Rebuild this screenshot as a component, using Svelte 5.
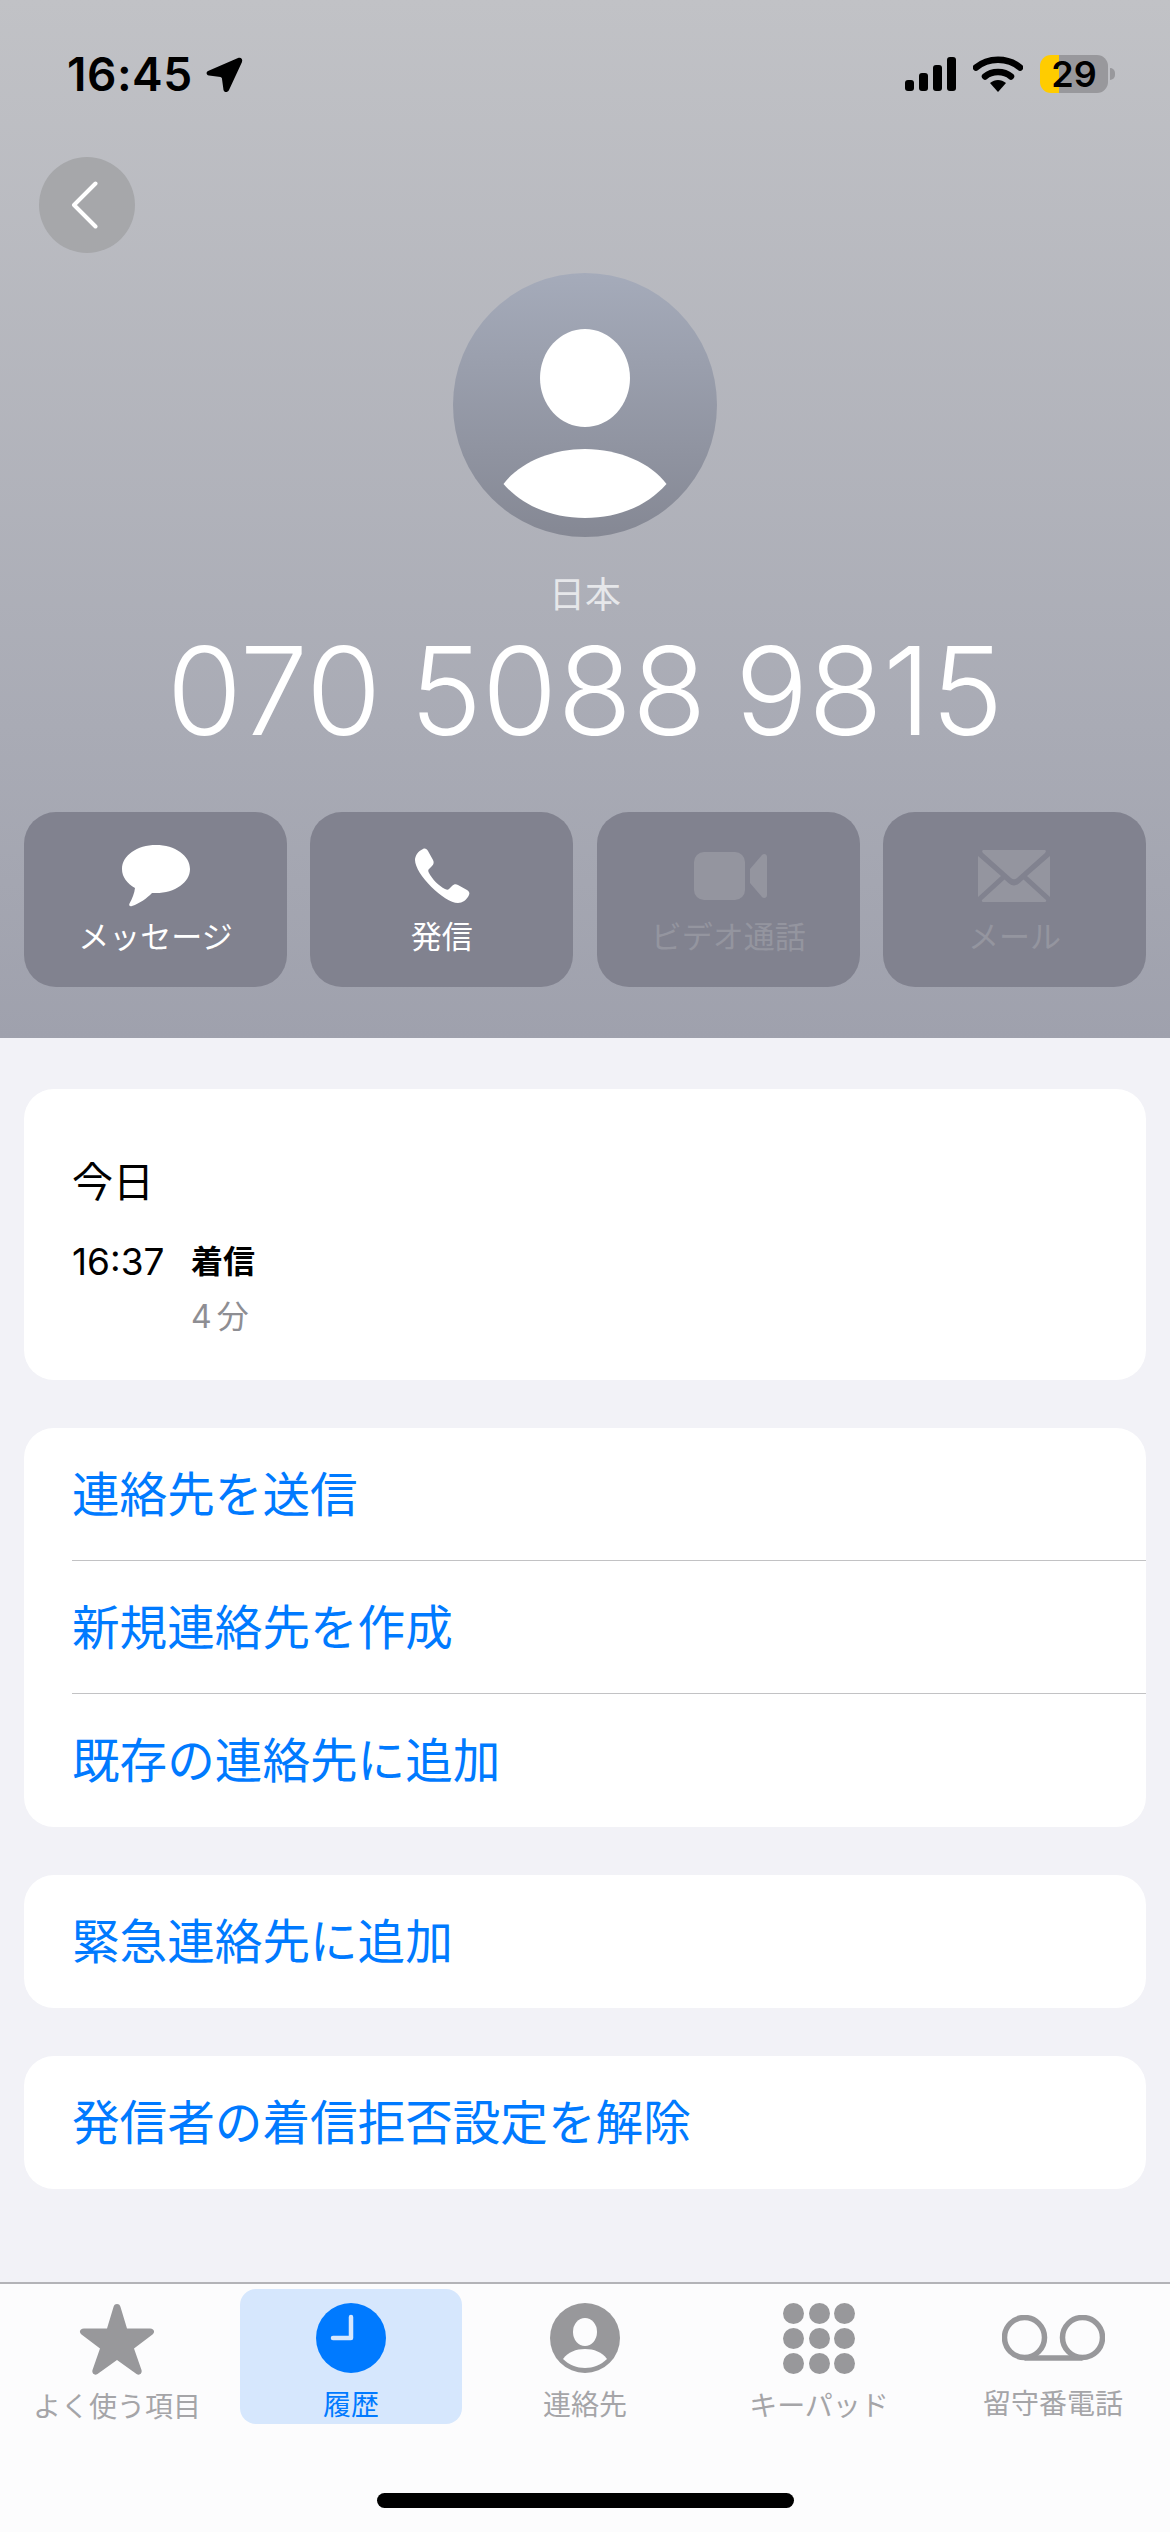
<script>
  const actions = [
    { label: 'メッセージ', icon: 'message', on: true },
    { label: '発信', icon: 'phone', on: true },
    { label: 'ビデオ通話', icon: 'video', on: false },
    { label: 'メール', icon: 'mail', on: false }
  ];

  const contactRows = ['連絡先を送信', '新規連絡先を作成', '既存の連絡先に追加'];

  const tabs = [
    { label: 'よく使う項目', icon: 'star' },
    { label: '履歴', icon: 'clock', active: true },
    { label: '連絡先', icon: 'person' },
    { label: 'キーパッド', icon: 'keypad' },
    { label: '留守番電話', icon: 'voicemail' }
  ];

  const keys = [0, 1, 2, 3, 4, 5, 6, 7, 8];
</script>

<div class="screen">
  <header class="hero">
    <div class="status">
      <div class="clock">
        <span>16:45</span>
        <svg class="loc" viewBox="0 0 37 36" width="37" height="36">
          <path d="M2 14 L32 1 C35 0 37 2 36 5 L23 33 C21.500 36 18 35.500 17.500 33 L16 22 C16 21 15.500 20.500 14.500 20 L3 18.500 C0 18 0 15 2 14 Z" fill="#000" />
        </svg>
      </div>
      <div class="status-right">
        <svg viewBox="0 0 51 34" width="51" height="34">
          <rect x="0" y="23" width="9" height="11" rx="3" />
          <rect x="14" y="16" width="9" height="18" rx="3" />
          <rect x="28" y="8" width="9" height="26" rx="3" />
          <rect x="42" y="0" width="9" height="34" rx="3" />
        </svg>
        <svg viewBox="0 0 50 36" width="50" height="36">
          <path d="M3 11.500 C15 1 35 1 47 11.500" fill="none" stroke="#000" stroke-width="6.500" stroke-linecap="round" />
          <path d="M12 20.500 C19 14.500 31 14.500 38 20.500" fill="none" stroke="#000" stroke-width="6.500" stroke-linecap="round" />
          <path d="M17 27 C22 23 28 23 33 27 L25.500 35.500 C25.200 35.800 24.800 35.800 24.500 35.500 Z" fill="#000" />
        </svg>
        <div class="battery">
          <span class="cell">29</span>
          <span class="nub"></span>
        </div>
      </div>
    </div>

    <button class="back" aria-label="戻る">
      <svg viewBox="0 0 27 48" width="27" height="48">
        <path d="M24.500 2.500 L3 24 L24.500 45.500" fill="none" stroke="#fff" stroke-width="4" stroke-linecap="round" stroke-linejoin="round" />
      </svg>
    </button>

    <div class="avatar">
      <svg viewBox="0 0 264 264" width="264" height="264">
        <ellipse cx="132" cy="105" rx="45" ry="49" fill="#fff" />
        <path d="M50.500 211 C66 190 98 176 132 176 C166 176 198 190 213.500 211 C194 233 165 245 132 245 C99 245 70 233 50.500 211 Z" fill="#fff" />
      </svg>
    </div>

    <div class="country">日本</div>
    <div class="number">070 5088 9815</div>

    <div class="actions">
      {#each actions as a}
        <button class="action" class:off={!a.on}>
          <span class="action-icon">
            {#if a.icon === 'message'}
              <svg viewBox="0 0 68 62" width="68" height="62">
                <path d="M34 0 C15 0 0 10.500 0 24 C0 32 5 38.500 13 43 C12.500 48 10 54 7.500 58.500 C6.500 60.500 8 61.800 10 61 C18 58.500 25 53 30 48 C31.300 48 32.700 48 34 48 C53 48 68 37.500 68 24 C68 10.500 53 0 34 0 Z" fill="currentColor" />
              </svg>
            {:else if a.icon === 'phone'}
              <svg viewBox="0 0 56 56" width="56" height="56">
                <path d="M9 1 C11 0 13 1 14 3 L19 12 C20 14 20 16 18 18 L15 21 C14 22 14 23 15 25 C18 31 25 38 31 41 C33 42 34 42 35 41 L38 38 C40 36 42 36 44 37 L53 42 C55 43 56 45 55 47 C53 52 48 55 44 55 C30 55 1 26 1 12 C1 8 4 3 9 1 Z" fill="currentColor" />
              </svg>
            {:else if a.icon === 'video'}
              <svg class="video" viewBox="0 0 73 48" width="73" height="48">
                <rect x="0" y="0" width="51" height="48" rx="10" fill="currentColor" />
                <path d="M56 17 L68 3 C70 1 73 2 73 5 V43 C73 46 70 47 68 45 L56 31 Z" fill="currentColor" />
              </svg>
            {:else}
              <svg viewBox="0 0 72 52" width="72" height="52">
                <path d="M6 0 H66 C68 0 68.500 1.500 67 3 L39 28 C37 29.800 35 29.800 33 28 L5 3 C3.500 1.500 4 0 6 0 Z" fill="currentColor" />
                <path d="M0 6 L23 26 L0 47 Z M72 6 L49 26 L72 47 Z" fill="currentColor" />
                <path d="M26.500 29.500 L31 33.500 C34 36 38 36 41 33.500 L45.500 29.500 L68 50 C68.500 51 68 52 66 52 H6 C4 52 3.500 51 4 50 Z" fill="currentColor" />
              </svg>
            {/if}
          </span>
          <span class="action-label">{a.label}</span>
        </button>
      {/each}
    </div>
  </header>

  <main class="content">
    <section class="card recents">
      <div class="day">今日</div>
      <div class="call">
        <span class="call-time">16:37</span>
        <div>
          <div class="call-type">着信</div>
          <div class="call-len">4 分</div>
        </div>
      </div>
    </section>

    <section class="card">
      {#each contactRows as row}
        <div class="row">{row}</div>
      {/each}
    </section>

    <section class="card">
      <div class="row">緊急連絡先に追加</div>
    </section>

    <section class="card">
      <div class="row">発信者の着信拒否設定を解除</div>
    </section>
  </main>

  <nav class="tabbar">
    <div class="tabs">
      {#each tabs as t}
        <div class="tab" class:active={t.active}>
          <span class="tab-icon">
            {#if t.icon === 'star'}
              <svg viewBox="0 0 76 74" width="76" height="74">
                <path d="M38 2 C40 2 41 3 41.500 5 L48 26.500 H71 C75 26.500 76.500 30 73.500 32.500 L55 46.500 L62.500 68 C63.500 71.500 60.500 74 57.500 72 L38 58 L18.500 72 C15.500 74 12.500 71.500 13.500 68 L21 46.500 L2.500 32.500 C-.5 30 1 26.500 5 26.500 H28 L34.500 5 C35 3 36 2 38 2 Z" fill="currentColor" />
              </svg>
            {:else if t.icon === 'clock'}
              <svg viewBox="0 0 70 70" width="70" height="70">
                <circle cx="35" cy="35" r="35" fill="currentColor" />
                <path d="M35 14 V35 H17" fill="none" stroke="#d6e7fd" stroke-width="4.500" stroke-linecap="round" stroke-linejoin="round" />
              </svg>
            {:else if t.icon === 'person'}
              <svg viewBox="0 0 70 70" width="70" height="70">
                <circle cx="35" cy="35" r="35" fill="currentColor" />
                <ellipse cx="35" cy="29" rx="12" ry="14" fill="#fcfcfd" />
                <path d="M13 56 C18 49 26 46 35 46 C44 46 52 49 57 56 C51 62 43 65 35 65 C27 65 19 62 13 56 Z" fill="#fcfcfd" />
              </svg>
            {:else if t.icon === 'keypad'}
              <span class="keypad">
                {#each keys as k (k)}
                  <span class="key"></span>
                {/each}
              </span>
            {:else}
              <svg viewBox="0 0 103 46" width="103" height="46">
                <path d="M22.500 43 H80.500" stroke="currentColor" stroke-width="5.500" fill="none" />
                <circle cx="22.500" cy="22.500" r="20" fill="none" stroke="currentColor" stroke-width="5.500" />
                <circle cx="80.500" cy="22.500" r="20" fill="none" stroke="currentColor" stroke-width="5.500" />
              </svg>
            {/if}
          </span>
          <span class="tab-label">{t.label}</span>
        </div>
      {/each}
    </div>
    <div class="home-bar"></div>
  </nav>
</div>

<style>
  :global(body) {
    margin: 0;
    background: #f2f2f7;
  }

  .screen {
    width: 1170px;
    height: 2532px;
    display: flex;
    flex-direction: column;
    overflow: hidden;
    background: #f2f2f7;
    font-family: "Inter", "Noto Sans CJK JP", sans-serif;
  }

  .hero {
    height: 1038px;
    box-sizing: border-box;
    padding: 55px 24px 0;
    display: flex;
    flex-direction: column;
    background: linear-gradient(180deg, #c1c2c6 0%, #a9abb5 70%, #9fa1ad 100%);
  }

  .status {
    height: 38px;
    display: flex;
    align-items: center;
    justify-content: space-between;
    padding: 0 31px 0 43px;
    color: #000;
  }

  .clock {
    display: flex;
    align-items: center;
    gap: 13px;
    font-size: 46px;
    font-weight: 600;
    letter-spacing: 0.5px;
    line-height: 38px;
  }

  .loc {
    margin-top: 2px;
  }

  .status-right {
    display: flex;
    align-items: center;
    gap: 17px;
  }

  .status-right svg {
    display: block;
  }

  .battery {
    display: flex;
    align-items: center;
    gap: 2px;
  }

  .cell {
    width: 68px;
    height: 38px;
    border-radius: 11px;
    background: linear-gradient(90deg, #ffcc00 0, #ffcc00 19px, #98989c 19px, #98989c 100%);
    color: #000;
    font-size: 36px;
    font-weight: 600;
    line-height: 38px;
    text-align: center;
  }

  .nub {
    width: 5px;
    height: 12px;
    border-radius: 0 6px 6px 0;
    background: #98989c;
  }

  .back {
    width: 96px;
    height: 96px;
    margin: 64px 0 0 15px;
    padding: 0 6px 0 0;
    border: 0;
    border-radius: 50%;
    background: #a6a7aa;
    display: flex;
    align-items: center;
    justify-content: center;
  }

  .back svg {
    display: block;
  }

  .avatar {
    width: 264px;
    height: 264px;
    margin: 20px auto 0;
    border-radius: 50%;
    background: linear-gradient(180deg, #a5abba 0%, #858894 100%);
  }

  .avatar svg {
    display: block;
  }

  .country {
    margin-top: 34px;
    text-align: center;
    color: #e6e7ea;
    font-size: 36px;
    line-height: 48px;
  }

  .number {
    margin-top: 7px;
    text-align: center;
    color: #fff;
    font-size: 122px;
    font-weight: 300;
    word-spacing: -6px;
    line-height: 130px;
    white-space: nowrap;
  }

  .actions {
    display: grid;
    grid-template-columns: repeat(4, 263px);
    justify-content: space-between;
    margin-top: 56px;
  }

  .action {
    height: 175px;
    padding: 31px 0 0;
    border: 0;
    border-radius: 32px;
    background: #81828f;
    color: #fff;
    font-family: inherit;
    display: flex;
    flex-direction: column;
    align-items: center;
  }

  .action.off {
    color: #94959f;
  }

  .action-icon {
    height: 66px;
    display: flex;
    align-items: center;
    justify-content: center;
  }

  .action-icon svg {
    display: block;
  }

  .action-icon .video {
    margin-left: 4px;
  }

  .action-label {
    margin-top: 6px;
    font-size: 31px;
    line-height: 44px;
    white-space: nowrap;
  }

  .content {
    display: flex;
    flex-direction: column;
    gap: 48px;
    padding: 51px 24px 0;
  }

  .card {
    background: #fff;
    border-radius: 30px;
    overflow: hidden;
  }

  .recents {
    height: 291px;
    box-sizing: border-box;
    padding: 63px 48px 0;
  }

  .day {
    font-size: 41px;
    line-height: 60px;
    color: #000;
  }

  .call {
    display: flex;
    gap: 24px;
    margin-top: 25px;
  }

  .call-time {
    font-size: 37px;
    line-height: 50px;
    width: 95px;
    color: #000;
  }

  .call-type {
    font-size: 32px;
    font-weight: 700;
    line-height: 50px;
    color: #000;
  }

  .call-len {
    margin-top: 5px;
    font-size: 32px;
    line-height: 50px;
    word-spacing: -4px;
    color: #8e8e93;
  }

  .row {
    height: 133px;
    margin-left: 48px;
    box-sizing: border-box;
    border-bottom: 1px solid #c2c2c4;
    color: #007aff;
    font-size: 47.600px;
    line-height: 133px;
  }

  .row:last-child {
    border-bottom: 0;
  }

  .tabbar {
    margin-top: auto;
    height: 250px;
    box-sizing: border-box;
    border-top: 2px solid #b3b3b7;
    background: #fcfcfd;
    display: flex;
    flex-direction: column;
    align-items: center;
  }

  .tabs {
    width: 100%;
    display: grid;
    grid-template-columns: repeat(5, 234px);
    padding-top: 5px;
  }

  .tab {
    width: 222px;
    height: 135px;
    justify-self: center;
    box-sizing: border-box;
    padding-top: 14px;
    border-radius: 16px;
    color: #98989b;
    display: flex;
    flex-direction: column;
    align-items: center;
  }

  .tab.active {
    background: #d6e7fd;
    color: #007aff;
  }

  .tab-icon {
    height: 72px;
    display: flex;
    align-items: center;
    justify-content: center;
  }

  .tab-icon svg {
    display: block;
  }

  .keypad {
    display: grid;
    grid-template-columns: repeat(3, 21px);
    gap: 4px 4.500px;
  }

  .key {
    width: 21px;
    height: 21px;
    border-radius: 50%;
    background: currentColor;
  }

  .tab-label {
    margin-top: 12px;
    font-size: 28px;
    line-height: 40px;
    white-space: nowrap;
    color: #a5a5a8;
  }

  .tab.active .tab-label {
    color: #007aff;
  }

  .home-bar {
    width: 417px;
    height: 15px;
    margin-top: 69px;
    border-radius: 8px;
    background: #000;
  }
</style>
